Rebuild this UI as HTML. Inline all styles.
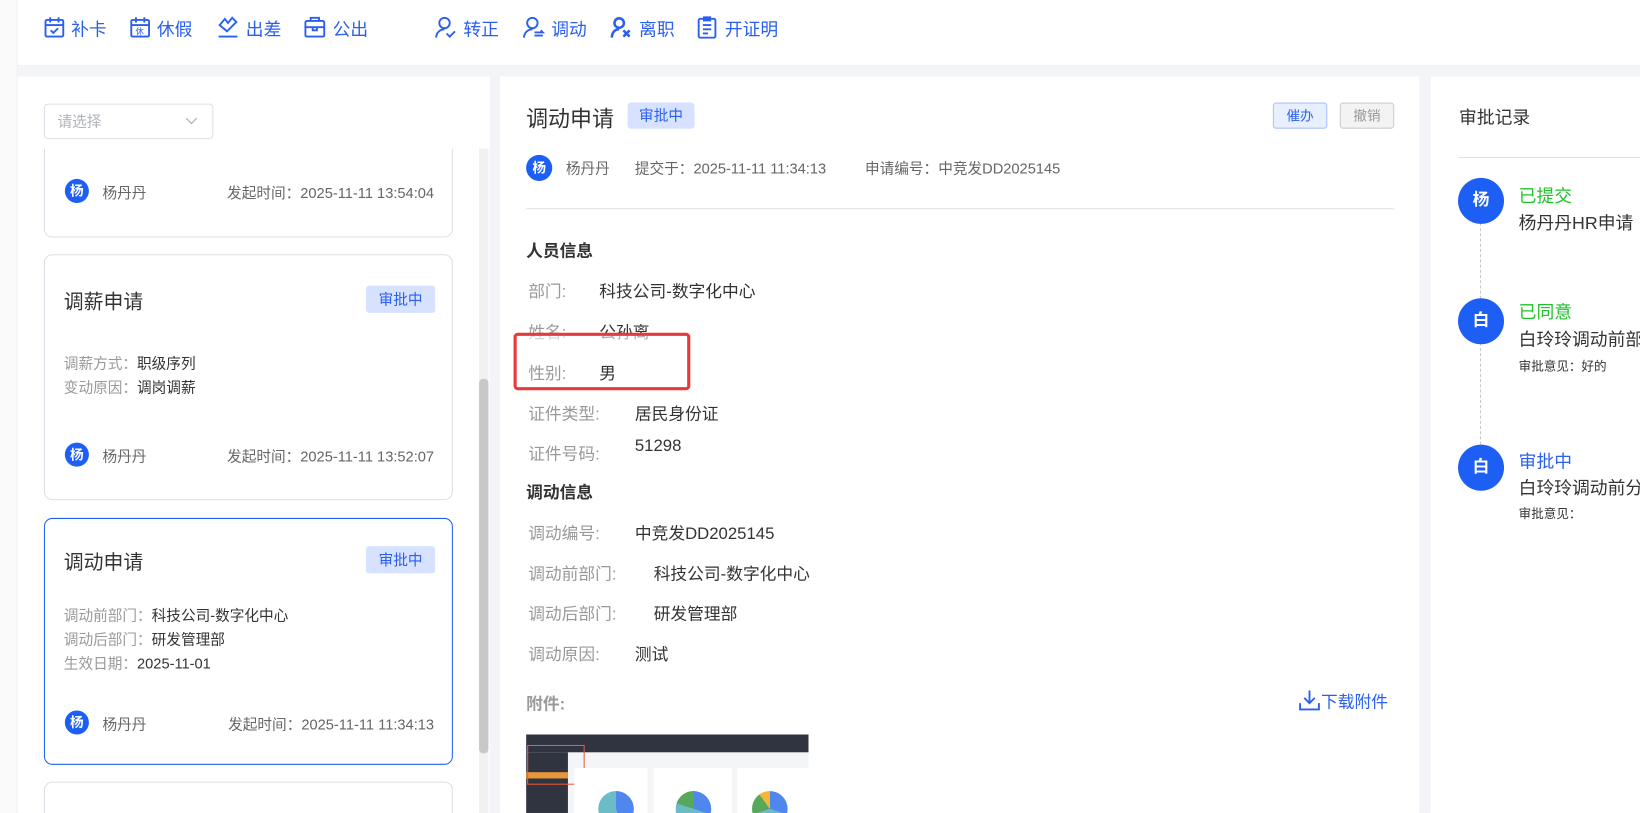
<!DOCTYPE html>
<html><head><meta charset="utf-8"><style>
*{margin:0;padding:0;box-sizing:border-box}
html,body{width:1640px;height:813px;overflow:hidden;background:#f3f4f8}
body{font-family:"Liberation Sans","Noto Sans CJK SC",sans-serif;color:#333}
#w{position:absolute;left:0;top:0;width:1568px;height:777px;overflow:hidden;transform:scale(1.04592,1.0463);transform-origin:0 0;background:#f3f4f8}
.a{position:absolute;white-space:nowrap}
.top{position:absolute;left:17px;top:0;width:1551px;height:62px;background:#fff}
.tb{position:absolute;top:14px;height:24px;display:flex;align-items:center;color:#2a5ff0;font-size:17px}
.tb svg{margin-right:6px}
.panel{position:absolute;background:#fff}
.card{position:absolute;left:42px;width:391px;border:1px solid #dcdfe6;border-radius:8px;background:#fff}
.tag{position:absolute;background:#d6e2ff;color:#2a5ff0;font-size:14px;border-radius:3px;text-align:center}
.av{position:absolute;width:23px;height:23px;border-radius:50%;background:#1d5ff5;color:#fff;font-size:13px;font-weight:bold;text-align:center;line-height:23px}
.g{color:#999}
.lbl{position:absolute;font-size:16px;color:#999;white-space:nowrap}
.val{position:absolute;font-size:16px;color:#333;white-space:nowrap}
.big{position:absolute;width:44px;height:44px;border-radius:50%;background:#1d5ff5;color:#fff;font-weight:bold;font-size:16px;text-align:center;line-height:44px}
</style></head><body><div id="w">
<div style="position:absolute;left:0;top:0;width:17px;height:777px;background:#fafafa;border-right:1px solid #eee"></div>
<div class="top"></div>
<div class="tb" style="left:42px"><svg width="20" height="22" viewBox="0 0 20 22" fill="none" stroke="#2a5ff0" stroke-width="1.8"><rect x="1.5" y="4" width="17" height="16" rx="1.5"/><path d="M1.5 9h17M6 1.5v5M14 1.5v5M6.5 14l2.5 2.5 4.5-4.5"/></svg>补卡</div>
<div class="tb" style="left:124px"><svg width="20" height="22" viewBox="0 0 20 22" fill="none" stroke="#2a5ff0" stroke-width="1.8"><rect x="1.5" y="4" width="17" height="16" rx="1.5"/><path d="M1.5 9h17M6 1.5v5M14 1.5v5"/><text x="5.5" y="18" font-size="8" fill="#2a5ff0" stroke="none">休</text></svg>休假</div>
<div class="tb" style="left:207px"><svg width="22" height="22" viewBox="0 0 22 22" fill="none" stroke="#2a5ff0" stroke-width="1.8"><path d="M3 9l5-6 3 4 4-5 4 4-9 9z M7 12l3 3M2 20h18"/></svg>出差</div>
<div class="tb" style="left:290px"><svg width="22" height="22" viewBox="0 0 22 22" fill="none" stroke="#2a5ff0" stroke-width="1.8"><rect x="2" y="5" width="18" height="15" rx="1.5"/><path d="M7 5V2h8v3M2 11h18M9 11v3h4v-3"/></svg>公出</div>
<div class="tb" style="left:415px"><svg width="22" height="22" viewBox="0 0 22 22" fill="none" stroke="#2a5ff0" stroke-width="1.8"><circle cx="10" cy="7" r="5"/><path d="M2 21c0-5 4-8 8-8M12 17l3 3 5-5"/></svg>转正</div>
<div class="tb" style="left:499px"><svg width="22" height="22" viewBox="0 0 22 22" fill="none" stroke="#2a5ff0" stroke-width="1.8"><circle cx="10" cy="7" r="5"/><path d="M2 21c0-5 4-8 8-8M12 16h8l-2-2M20 19h-8"/></svg>调动</div>
<div class="tb" style="left:583px"><svg width="22" height="22" viewBox="0 0 22 22" fill="none" stroke="#2a5ff0" stroke-width="2.4"><circle cx="9" cy="7" r="4.5"/><path d="M2 21c0-5 3-8 7-8M13 14l6 6M19 14l-6 6"/></svg>离职</div>
<div class="tb" style="left:665px"><svg width="22" height="22" viewBox="0 0 22 22" fill="none" stroke="#2a5ff0" stroke-width="1.8"><rect x="3" y="3" width="16" height="18" rx="1.5"/><path d="M8 1.5h6v3H8zM7 9h8M7 13h8M7 17h5"/></svg>开证明</div>

<div class="panel" style="left:17px;top:73px;width:451px;height:704px"></div>
<div class="a" style="left:42px;top:99px;width:162px;height:34px;border:1px solid #dcdfe6;border-radius:4px;font-size:14px;color:#b0b3b8;line-height:32px;padding-left:12px">请选择<svg style="position:absolute;left:134px;top:12px" width="12" height="8" viewBox="0 0 12 8" fill="none" stroke="#b0b3b8" stroke-width="1.2"><path d="M1 1l5 5 5-5"/></svg></div>
<div style="position:absolute;left:17px;top:142px;width:440px;height:635px;overflow:hidden">
 <div class="card" style="left:25px;top:-60px;height:145px">
  <div class="av" style="left:19px;top:88px">杨</div>
  <div class="a" style="left:55px;top:91px;font-size:14px;color:#666">杨丹丹</div>
  <div class="a" style="right:17px;top:91px;font-size:14px;color:#666">发起时间：2025-11-11 13:54:04</div>
 </div>
 <div class="card" style="left:25px;top:101px;height:235px">
  <div class="a" style="left:18px;top:30px;font-size:19px;color:#333">调薪申请</div>
  <div class="tag" style="left:307px;top:29px;width:66px;height:26px;line-height:26px">审批中</div>
  <div class="a" style="left:18px;top:93px;font-size:14px"><span class="g">调薪方式：</span>职级序列</div>
  <div class="a" style="left:18px;top:116px;font-size:14px"><span class="g">变动原因：</span>调岗调薪</div>
  <div class="av" style="left:19px;top:179px">杨</div>
  <div class="a" style="left:55px;top:182px;font-size:14px;color:#666">杨丹丹</div>
  <div class="a" style="right:17px;top:182px;font-size:14px;color:#666">发起时间：2025-11-11 13:52:07</div>
 </div>
 <div class="card" style="left:25px;top:353px;height:236px;border-color:#1d5ff5">
  <div class="a" style="left:18px;top:27px;font-size:19px;color:#333">调动申请</div>
  <div class="tag" style="left:307px;top:26px;width:66px;height:26px;line-height:26px">审批中</div>
  <div class="a" style="left:18px;top:82px;font-size:14px"><span class="g">调动前部门：</span>科技公司-数字化中心</div>
  <div class="a" style="left:18px;top:105px;font-size:14px"><span class="g">调动后部门：</span>研发管理部</div>
  <div class="a" style="left:18px;top:128px;font-size:14px"><span class="g">生效日期：</span>2025-11-01</div>
  <div class="av" style="left:19px;top:183px">杨</div>
  <div class="a" style="left:55px;top:186px;font-size:14px;color:#666">杨丹丹</div>
  <div class="a" style="right:17px;top:186px;font-size:14px;color:#666">发起时间：2025-11-11 11:34:13</div>
 </div>
 <div class="card" style="left:25px;top:605px;height:100px"></div>
</div>
<div style="position:absolute;left:458px;top:142px;width:9px;height:635px;background:#f1f1f1"></div>
<div style="position:absolute;left:458px;top:362px;width:9px;height:358px;background:#c8c8c8;border-radius:4px"></div>

<div class="panel" style="left:478px;top:73px;width:879px;height:704px"></div>
<div class="a" style="left:503px;top:98px;font-size:21px;color:#333">调动申请</div>
<div class="tag" style="left:600px;top:98px;width:64px;height:25px;line-height:25px">审批中</div>
<div class="a" style="left:1217px;top:98px;width:52px;height:25px;border:1px solid #a9c2fb;background:#e8efff;border-radius:3px;color:#2a5ff0;font-size:13px;text-align:center;line-height:23px">催办</div>
<div class="a" style="left:1281px;top:98px;width:52px;height:25px;border:1px solid #ccc;background:#f3f3f3;border-radius:3px;color:#999;font-size:13px;text-align:center;line-height:23px">撤销</div>
<div class="av" style="left:503px;top:148px;width:25px;height:25px;line-height:25px">杨</div>
<div class="a" style="left:541px;top:151px;font-size:14px;color:#666">杨丹丹</div>
<div class="a" style="left:607px;top:151px;font-size:14px;color:#666">提交于：2025-11-11 11:34:13</div>
<div class="a" style="left:827px;top:151px;font-size:14px;color:#666">申请编号：中竞发DD2025145</div>
<div style="position:absolute;left:503px;top:199px;width:830px;height:1px;background:#dfe1e6"></div>
<div class="a" style="left:503px;top:226px;font-size:16px;font-weight:bold;color:#333">人员信息</div>
<div class="lbl" style="left:505px;top:265px">部门:</div><div class="val" style="left:573px;top:265px">科技公司-数字化中心</div>
<div class="lbl" style="left:505px;top:304px">姓名:</div><div class="val" style="left:573px;top:304px">公孙离</div>
<div class="lbl" style="left:505px;top:382px">证件类型:</div><div class="val" style="left:607px;top:382px">居民身份证</div>
<div class="lbl" style="left:505px;top:420px">证件号码:</div><div class="val" style="left:607px;top:418px">51298</div>
<div class="a" style="left:503px;top:457px;font-size:16px;font-weight:bold;color:#333">调动信息</div>
<div class="lbl" style="left:505px;top:496px">调动编号:</div><div class="val" style="left:607px;top:496px">中竞发DD2025145</div>
<div class="lbl" style="left:505px;top:535px">调动前部门:</div><div class="val" style="left:625px;top:535px">科技公司-数字化中心</div>
<div class="lbl" style="left:505px;top:573px">调动后部门:</div><div class="val" style="left:625px;top:573px">研发管理部</div>
<div class="lbl" style="left:505px;top:612px">调动原因:</div><div class="val" style="left:607px;top:612px">测试</div>
<div style="position:absolute;left:491px;top:318px;width:169px;height:55px;border:3px solid #e83a3a;border-radius:4px;background:rgba(255,255,255,0.6)"></div>
<div class="val" style="left:573px;top:343px">男</div>
<div class="lbl" style="left:505px;top:343px">性别:</div>
<div class="a" style="left:503px;top:659px;font-size:16px;font-weight:bold;color:#999">附件:</div>
<div class="a" style="left:1241px;top:657px;font-size:16px;color:#2a5ff0;display:flex;align-items:center"><svg width="22" height="22" viewBox="0 0 22 22" fill="none" stroke="#2a5ff0" stroke-width="1.8"><path d="M11 2v12M6 9l5 5 5-5M2 14v6h18v-6"/></svg>下载附件</div>
<div style="position:absolute;left:503px;top:702px;width:270px;height:75px;background:#f4f5f7;overflow:hidden">
 <div style="position:absolute;left:0;top:0;width:270px;height:17px;background:#2f3440"></div>
 <div style="position:absolute;left:0;top:17px;width:40px;height:58px;background:#2f3440"></div>
 <div style="position:absolute;left:0;top:36px;width:40px;height:6px;background:#e8963a"></div>
 <div style="position:absolute;left:1px;top:10px;width:55px;height:38px;border:1px solid #e85a3a"></div>
 <div style="position:absolute;left:46px;top:32px;width:70px;height:50px;background:#fff"></div>
 <div style="position:absolute;left:122px;top:32px;width:75px;height:50px;background:#fff"></div>
 <div style="position:absolute;left:202px;top:32px;width:68px;height:50px;background:#fff"></div>
 <div style="position:absolute;left:69px;top:54px;width:34px;height:34px;border-radius:50%;background:conic-gradient(#4f87ee 0 45%,#6bbcc6 0)"></div>
 <div style="position:absolute;left:143px;top:54px;width:34px;height:34px;border-radius:50%;background:conic-gradient(#4f87ee 0 30%,#6bbcc6 0 80%,#57a85a 0)"></div>
 <div style="position:absolute;left:216px;top:54px;width:34px;height:34px;border-radius:50%;background:conic-gradient(#4f87ee 0 30%,#6bbcc6 0 70%,#57a85a 0 90%,#f0b93a 0)"></div>
</div>

<div class="panel" style="left:1368px;top:73px;width:200px;height:704px;overflow:hidden"></div>
<div class="a" style="left:1395px;top:98px;font-size:17px;color:#333">审批记录</div>
<div style="position:absolute;left:1395px;top:150px;width:173px;height:1px;background:#dfe1e6"></div>
<div style="position:absolute;left:1415px;top:213px;height:212px;border-left:1px dashed #c8c8c8"></div>
<div class="big" style="left:1394px;top:170px">杨</div>
<div class="big" style="left:1394px;top:285px">白</div>
<div class="big" style="left:1394px;top:425px">白</div>
<div class="a" style="left:1452px;top:173px;font-size:17px;color:#1fc22a">已提交</div>
<div class="a" style="left:1452px;top:199px;font-size:17px;color:#333">杨丹丹HR申请</div>
<div class="a" style="left:1452px;top:284px;font-size:17px;color:#1fc22a">已同意</div>
<div class="a" style="left:1452px;top:310px;font-size:17px;color:#333">白玲玲调动前部门</div>
<div class="a" style="left:1452px;top:341px;font-size:12px;color:#333">审批意见：好的</div>
<div class="a" style="left:1452px;top:427px;font-size:17px;color:#2a5ff0">审批中</div>
<div class="a" style="left:1452px;top:452px;font-size:17px;color:#333">白玲玲调动前分</div>
<div class="a" style="left:1452px;top:482px;font-size:12px;color:#333">审批意见：</div>
</div></body></html>
